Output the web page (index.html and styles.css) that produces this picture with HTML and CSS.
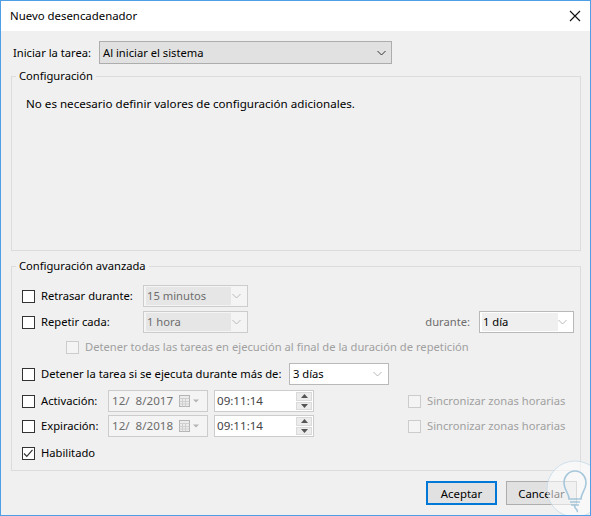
FILE: index.html
```html
<!DOCTYPE html>
<html lang="es">
<head>
<meta charset="utf-8">
<title>Nuevo desencadenador</title>
<link rel="stylesheet" href="styles.css">
</head>
<body>
<div class="window">
  <div class="titlebar">
    <span class="title">Nuevo desencadenador</span>
    <svg class="close" width="12" height="12" viewBox="0 0 12 12"><path d="M1 1L11 11M11 1L1 11" stroke="#111" stroke-width="1.1" fill="none"/></svg>
  </div>
  <div class="content">
    <div class="start-row">
      <span class="start-label">Iniciar la tarea:</span>
      <div class="main-select">
        <span>Al iniciar el sistema</span>
        <svg class="chev" width="9" height="6" viewBox="0 0 9 6"><path d="M0.5 1L4.5 5L8.5 1" stroke="#333" fill="none"/></svg>
      </div>
    </div>

    <div class="group group-config">
      <span class="legend">Configuración</span>
      <p class="note">No es necesario definir valores de configuración adicionales.</p>
    </div>

    <div class="group group-adv">
      <span class="legend">Configuración avanzada</span>

      <div class="row r1">
        <span class="cb"></span><span class="lbl w102">Retrasar durante:</span>
        <div class="combo dis w105"><span class="ctext">15 minutos</span><svg class="chev" width="9" height="6" viewBox="0 0 9 6"><path d="M0.5 1L4.5 5L8.5 1" stroke="#b9b9b9" fill="none"/></svg></div>
      </div>

      <div class="row r2">
        <span class="cb"></span><span class="lbl w102">Repetir cada:</span>
        <div class="combo dis w105"><span class="ctext">1 hora</span><svg class="chev" width="9" height="6" viewBox="0 0 9 6"><path d="M0.5 1L4.5 5L8.5 1" stroke="#b9b9b9" fill="none"/></svg></div>
        <span class="lbl gray durante">durante:</span>
        <div class="combo mid w95"><span class="ctext dark">1 día</span><svg class="chev" width="9" height="6" viewBox="0 0 9 6"><path d="M0.5 1L4.5 5L8.5 1" stroke="#b9b9b9" fill="none"/></svg></div>
      </div>

      <div class="row r3">
        <span class="cb cb-dis"></span><span class="lbl light">Detener todas las tareas en ejecución al final de la duración de repetición</span>
      </div>

      <div class="row r4">
        <span class="cb"></span><span class="lbl w248">Detener la tarea si se ejecuta durante más de:</span>
        <div class="combo en w100"><span class="ctext dark">3 días</span><svg class="chev" width="9" height="6" viewBox="0 0 9 6"><path d="M0.5 1L4.5 5L8.5 1" stroke="#b9b9b9" fill="none"/></svg></div>
      </div>

      <div class="row r5">
        <span class="cb"></span><span class="lbl w67">Activación:</span>
        <div class="datebox"><span class="dtext">12/&nbsp;&nbsp;8/2017</span>
          <svg class="cal" width="22" height="12" viewBox="0 0 22 12"><rect x="0.5" y="0.5" width="10" height="11" fill="#ececec" stroke="#b4b4b4"/><path d="M0.5 3.5H10.5M3.5 3.5V11.5M6.5 3.5V11.5M0.5 6.5H10.5M0.5 9H10.5" stroke="#cfcfcf" fill="none"/><path d="M14 4.5H20L17 7.5Z" fill="#b4b4b4"/></svg>
        </div>
        <div class="timebox"><span class="ttext">09:11:14</span>
          <div class="spin"><span class="sb"><svg width="7" height="4" viewBox="0 0 7 4"><path d="M0 4H7L3.5 0Z" fill="#555"/></svg></span><span class="sb"><svg width="7" height="4" viewBox="0 0 7 4"><path d="M0 0H7L3.5 4Z" fill="#555"/></svg></span></div>
        </div>
        <span class="cb cb-dis sync"></span><span class="lbl light">Sincronizar zonas horarias</span>
      </div>

      <div class="row r6">
        <span class="cb"></span><span class="lbl w67">Expiración:</span>
        <div class="datebox"><span class="dtext">12/&nbsp;&nbsp;8/2018</span>
          <svg class="cal" width="22" height="12" viewBox="0 0 22 12"><rect x="0.5" y="0.5" width="10" height="11" fill="#ececec" stroke="#b4b4b4"/><path d="M0.5 3.5H10.5M3.5 3.5V11.5M6.5 3.5V11.5M0.5 6.5H10.5M0.5 9H10.5" stroke="#cfcfcf" fill="none"/><path d="M14 4.5H20L17 7.5Z" fill="#b4b4b4"/></svg>
        </div>
        <div class="timebox"><span class="ttext">09:11:14</span>
          <div class="spin"><span class="sb"><svg width="7" height="4" viewBox="0 0 7 4"><path d="M0 4H7L3.5 0Z" fill="#555"/></svg></span><span class="sb"><svg width="7" height="4" viewBox="0 0 7 4"><path d="M0 0H7L3.5 4Z" fill="#555"/></svg></span></div>
        </div>
        <span class="cb cb-dis sync"></span><span class="lbl light">Sincronizar zonas horarias</span>
      </div>

      <div class="row r7">
        <span class="cb"><svg width="13" height="13" viewBox="0 0 13 13"><path d="M2 6.5L4.8 9.3L10.5 2.8" stroke="#333" stroke-width="1.2" fill="none"/></svg></span><span class="lbl">Habilitado</span>
      </div>
    </div>

    <div class="buttons">
      <button class="btn default">Aceptar</button>
      <button class="btn">Cancelar</button>
    </div>
  </div>
  <svg class="watermark" width="60" height="60" viewBox="0 0 60 60">
    <circle cx="30" cy="30" r="28" fill="rgba(255,255,255,0.55)" stroke="rgba(190,215,232,0.7)" stroke-width="1"/>
    <path d="M24 40C24 34 19 31 19 24C19 17 24 12 30 12C36 12 41 17 41 24C41 31 36 34 36 40Z" fill="none" stroke="rgba(150,190,215,0.85)" stroke-width="1.6"/>
    <path d="M25 43H35M26 46H34M30 46C28 50 34 50 32 53" fill="none" stroke="rgba(150,190,215,0.85)" stroke-width="1.6"/>
  </svg>
</div>
</body>
</html>
```

FILE: styles.css
```css
* { box-sizing: border-box; }
html, body { margin: 0; padding: 0; }
body {
  font-family: "Noto Sans", "Open Sans", sans-serif;
  font-size: 11.2px;
  color: #000;
  background: #f0f0f0;
}
.window {
  position: relative;
  width: 591px;
  height: 516px;
  border: 1px solid #4f9ee6;
  background: #f0f0f0;
  overflow: hidden;
}
.titlebar {
  height: 30px;
  background: #fff;
  display: flex;
  align-items: center;
  justify-content: space-between;
  padding: 0 9px 0 9px;
}
.title { font-size: 11.4px; line-height: 16px; }
.close { display: block; }

.content { padding: 10px 9px 0 10px; }

.start-row { display: flex; align-items: center; height: 23px; padding-left: 2px; }
.start-label { width: 86px; line-height: 16px; }
.main-select {
  width: 293px;
  height: 23px;
  border: 1px solid #adadad;
  background: #e1e1e1;
  display: flex;
  align-items: center;
  justify-content: space-between;
  padding: 0 5px 0 3px;
}
.chev { display: block; }

.group {
  position: relative;
  width: 570px;
  border: 1px solid #dcdcdc;
}
.legend {
  position: absolute;
  top: -9px;
  left: 4px;
  padding: 0 3px;
  line-height: 16px;
  background: #f0f0f0;
}
.group-config { margin-top: 12px; height: 175px; padding: 19px 14px 0; }
.note { margin: 0; line-height: 16px; font-size: 11.6px; }

.group-adv { margin-top: 15px; height: 205px; padding: 18px 6px 0 10px; }

.row { display: flex; align-items: center; height: 22px; }
.r2 { margin-top: 4px; }
.r3 { margin-top: 4px; height: 20px; padding-left: 44px; }
.r4 { margin-top: 6px; }
.r5 { margin-top: 5px; }
.r6 { margin-top: 3px; }
.r7 { margin-top: 6px; height: 20px; }

.cb {
  flex: none;
  width: 13px;
  height: 13px;
  border: 1px solid #333;
  background: #fff;
  margin-right: 6px;
  display: block;
}
.cb svg { display: block; margin: -1px; }
.cb-dis { border-color: #cccccc; background: #f4f4f4; }
.sync { margin-left: 94px; }

.lbl { line-height: 16px; white-space: nowrap; }
.w102 { width: 102px; }
.w248 { width: 248px; }
.w67 { width: 67px; }
.gray { color: #6d6d6d; }
.light { color: #a0a0a0; }
.durante { margin-left: auto; margin-right: 9px; }

.combo {
  height: 22px;
  display: flex;
  align-items: center;
  justify-content: space-between;
  padding: 2px 6px 2px 2px;
}
.combo .ctext {
  display: block;
  height: 18px;
  line-height: 18px;
  padding-left: 1px;
  color: #6d6d6d;
}
.combo .ctext.dark { color: #000; }
.w105 { width: 105px; }
.w105 .ctext { width: 85px; }
.w95 { width: 95px; }
.w95 .ctext { width: 76px; }
.w100 { width: 100px; }
.w100 .ctext { width: 80px; }
.dis { border: 1px solid #cccccc; background: #f4f4f4; }
.dis .ctext { background: #e6e6e6; }
.mid { border: 1px solid #b9b9b9; background: #fff; }
.mid .ctext { background: #efefef; }
.en { border: 1px solid #b9b9b9; background: #fff; }
.en .ctext { background: #fff; }

.datebox {
  width: 100px;
  height: 22px;
  border: 1px solid #cccccc;
  background: #f4f4f4;
  display: flex;
  align-items: center;
  justify-content: space-between;
  padding: 0 6px 0 3px;
  margin-right: 6px;
}
.dtext { color: #6d6d6d; line-height: 16px; font-size: 11.6px; }
.cal { display: block; }

.timebox {
  width: 100px;
  height: 22px;
  border: 1px solid #cccccc;
  background: #fff;
  display: flex;
  align-items: center;
  justify-content: space-between;
  padding: 1px 1px 1px 2px;
}
.ttext { color: #444; line-height: 16px; font-size: 11.6px; }
.spin { display: flex; flex-direction: column; gap: 1px; height: 18px; width: 16px; }
.sb {
  flex: 1;
  background: #ececec;
  border: 1px solid #dadada;
  display: flex;
  align-items: center;
  justify-content: center;
}
.sb svg { display: block; }

.buttons {
  display: flex;
  justify-content: flex-end;
  gap: 9px;
  margin-top: 10px;
  padding-right: 4px;
}
.btn {
  width: 71px;
  height: 24px;
  font-family: inherit;
  font-size: 11.4px;
  color: #000;
  background: #e1e1e1;
  border: 1px solid #adadad;
  padding: 0;
  margin: 0;
}
.btn.default { border: 2px solid #0078d7; }

.watermark {
  position: absolute;
  left: 544px;
  top: 458px;
}
```
